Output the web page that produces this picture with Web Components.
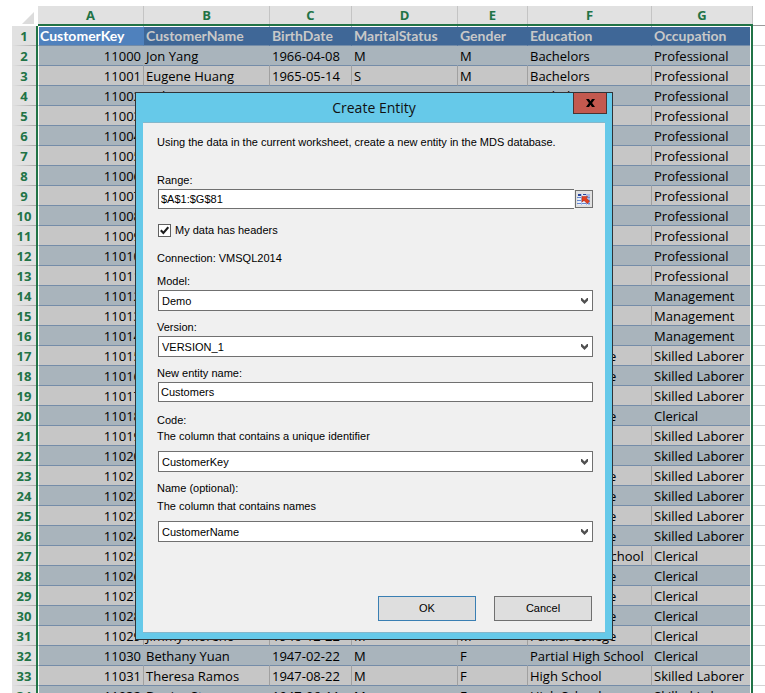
<!DOCTYPE html>
<html lang="en">
<head>
<meta charset="utf-8">
<title>Create Entity</title>
<style>
body { margin: 0; background: #fff; color: #000; }
</style>
</head>
<body>
<desktop-view>
  <work-sheet></work-sheet>
  <dialog-window slot="dialog" heading="Create Entity">
    <entity-form></entity-form>
  </dialog-window>
</desktop-view>

<script>
const attach = (el, html) => { el.attachShadow({ mode: 'open' }).innerHTML = html; return el.shadowRoot; };

class DesktopView extends HTMLElement {
  constructor() {
    super();
    attach(this, `<style>
      :host { display: block; position: relative; height: 100vh; min-height: 640px; overflow: hidden; }
      ::slotted([slot=dialog]) { position: absolute; left: 135px; top: 92px; }
    </style><slot></slot><slot name="dialog"></slot>`);
  }
}

const HEAD = ['CustomerKey', 'CustomerName', 'BirthDate', 'MaritalStatus', 'Gender', 'Education', 'Occupation'];
const P = 'Professional', M = 'Management', S = 'Skilled Laborer', C = 'Clerical', PC = 'Partial College';
const ROWS = [
  ['Jon Yang', '1966-04-08', 'M', 'M', 'Bachelors', P],
  ['Eugene Huang', '1965-05-14', 'S', 'M', 'Bachelors', P],
  ['Ruben Torres', '1965-08-12', 'M', 'M', 'Bachelors', P],
  ...Array.from({ length: 9 }, () => ['', '', '', '', '', P]),
  ...Array.from({ length: 3 }, () => ['', '', '', '', '', M]),
  ['', '', '', '', PC, S],
  ['', '', '', '', PC, S],
  ['', '', '', '', '', S],
  ['', '', '', '', PC, C],
  ['', '', '', '', '', S],
  ['', '', '', '', '', S],
  ['', '', '', '', PC, S],
  ['', '', '', '', PC, S],
  ['', '', '', '', PC, S],
  ['', '', '', '', PC, S],
  ['', '', '', '', 'Partial High School', C],
  ['', '', '', '', PC, C],
  ['', '', '', '', PC, C],
  ['', '', '', '', PC, C],
  ['Jimmy Moreno', '1946-12-22', 'M', 'M', PC, C],
  ['Bethany Yuan', '1947-02-22', 'M', 'F', 'Partial High School', C],
  ['Theresa Ramos', '1947-08-22', 'M', 'F', 'High School', S],
  ['Denise Stone', '1947-06-11', 'M', 'F', 'High School', S]
];

class WorkSheet extends HTMLElement {
  constructor() {
    super();
    const cols = [26, 106, 126, 82, 106, 70, 124, 101].map(w => `<col style="width:${w}px">`).join('');
    const letters = [...'ABCDEFG'].map(l => `<th scope="col">${l}</th>`).join('');
    const head = HEAD.map(t => `<td>${t}</td>`).join('');
    const body = ROWS.map((r, i) => `<tr><th scope="row">${i + 2}</th><td>${11000 + i}</td>${r.map(t => `<td>${t}</td>`).join('')}<td class="rest"></td></tr>`).join('');
    attach(this, `<style>
      :host { display: block; padding: 6px 0 0 12px; font: 13px/18px "Open Sans", "Noto Sans", sans-serif; }
      table { width: 100%; table-layout: fixed; border-collapse: separate; border-spacing: 0; --green: linear-gradient(#217346, #217346); }
      th, td { box-sizing: border-box; height: 20px; padding: 0 0 0 2px; text-align: left; white-space: nowrap; overflow: hidden; border-bottom: 1px solid #748ca8; border-right: 1px solid #a0a0a0; }
      th { padding: 0; text-align: center; color: #217346; font: bold 13px/18px "Open Sans", "Noto Sans", sans-serif; }
      thead th { border: 0; padding: 0 1px 2px 0; background: var(--green) bottom / 100% 2px no-repeat, linear-gradient(#c4c4c4, #c4c4c4) right / 1px 100% no-repeat, #e1e1e1; }
      thead .corner { padding: 0; border: 0; background: #fff; }
      .corner svg { display: block; margin: 4px 0 0 10px; }
      tbody th { border: 0; padding: 0 2px 1px 0; background: var(--green) right / 2px 100% no-repeat, linear-gradient(90deg, #e1e1e1, #a6a6a6) bottom / 100% 1px no-repeat, #e1e1e1; }
      td { --fill: #c6c6c6; --rule: #a0a0a0; background: var(--fill); border-right-color: var(--rule); }
      tr:nth-child(even) td { --fill: #a9b4bc; --rule: #a9b4bc; }
      tr.head td { --fill: #3f6797; --rule: #3f6797; --top: #fff; color: #c8c8c8; font: bold 14px/18px Lato, sans-serif; border-top: 1px solid #fff; vertical-align: top; }
      tr td:nth-child(2) { text-align: right; padding: 0 2px 0 0; border-left: 1px solid #fff; }
      tr.head td:nth-child(2) { --fill: #4f81bd; --rule: #4f81bd; text-align: left; color: #fff; padding-left: 1px; }
      tbody tr td:nth-child(8) { border-right: 0; border-bottom: 0; padding-bottom: 1px; background: var(--green) right / 2px 100% no-repeat, linear-gradient(#fff, #fff) right 2px top / 1px 100% no-repeat, linear-gradient(var(--top, transparent), var(--top, transparent)) top / 100% 1px no-repeat, linear-gradient(#748ca8, #748ca8) bottom / 100% 1px no-repeat, var(--fill); }
      tbody tr.head td:nth-child(8) { border-top: 0; padding-top: 1px; }
      thead td.rest, tbody tr td.rest, tbody tr.head td.rest { background: #fff; border: 0; border-bottom: 1px solid #d4d4d4; }
      thead td.rest { border-bottom-color: #9b9b9b; }
    </style>
    <table><colgroup>${cols}<col></colgroup>
    <thead><tr><td class="corner"><svg width="12" height="12" aria-hidden="true"><path d="M12 0V12H0Z" fill="#dcdcdc"/></svg></td>${letters}<td class="rest"></td></tr></thead>
    <tbody><tr class="head"><th scope="row">1</th>${head}<td class="rest"></td></tr>${body}</tbody></table>`);
  }
}

class DialogWindow extends HTMLElement {
  constructor() {
    super();
    attach(this, `<style>
      :host { display: block; box-sizing: border-box; width: 478px; max-width: calc(100% - 135px); border: 1px solid #2f3337; background: #66c9e9; padding: 0 7px 6px; }
      header { display: grid; grid-template-columns: 1fr; height: 29px; }
      h1 { grid-area: 1 / 1; margin: 0; text-align: center; font: 14px/29px "Open Sans", "Noto Sans", sans-serif; color: #111; }
      button { grid-area: 1 / 1; justify-self: end; box-sizing: border-box; width: 34px; height: 21px; margin-right: -2px; padding: 0; border: 1px solid #4b3331; border-top: 0; background: #c3594f; display: grid; place-items: center; }
      main { background: #f0f0f0; border-top: 1px solid #85b7cb; border-bottom: 1px solid #85b7cb; }
    </style>
    <header><h1></h1><button aria-label="Close"><svg width="9" height="8" viewBox="0 0 9 8"><path d="M0 0H3L4.5 2.2 6 0H9L6.1 4 9 8H6L4.5 5.8 3 8H0L2.9 4Z" fill="#000"/></svg></button></header>
    <main><slot></slot></main>`).querySelector('h1').textContent = this.getAttribute('heading');
  }
}

const FIELD = `
  :host { display: block; }
  label, p { display: block; margin: 0; line-height: 14px; }
  .box { display: flex; margin: 2px 0 0 1px; }
  input, select { box-sizing: border-box; flex: 1; min-width: 0; margin: 0; border: 1px solid #707070; border-radius: 0; background: #fff; color: #000; font: inherit; appearance: none; outline: 0; }`;

class TextField extends HTMLElement {
  constructor() {
    super();
    const root = attach(this, `<style>${FIELD}
      input { height: 20px; padding: 0 2px; }
      :host([joined]) input { border-right: 0; }
    </style><label for="c"></label><div class="box"><input id="c" type="text"><slot></slot></div>`);
    root.querySelector('label').textContent = this.getAttribute('label');
    root.querySelector('input').value = this.getAttribute('value');
  }
}

class SelectField extends HTMLElement {
  constructor() {
    super();
    const hint = this.getAttribute('hint');
    const root = attach(this, `<style>${FIELD}
      .box { display: grid; align-items: center; }
      .hinted { margin-top: 8px; }
      p { margin-top: var(--hint-gap, 2px); }
      select, svg { grid-area: 1 / 1; }
      select { height: 21px; padding: 0 20px 0 3px; }
      svg { justify-self: end; margin-right: 5px; pointer-events: none; }
    </style><label for="c"></label>${hint ? '<p id="h"></p>' : ''}
    <div class="box ${hint ? 'hinted' : ''}"><select id="c" ${hint ? 'aria-describedby="h"' : ''}><option></option></select>
    <svg width="7" height="6" viewBox="0 0 7 6" aria-hidden="true"><path d="M0 0H1L3.5 2.5 6 0H7V2.5L3.5 6 0 2.5Z" fill="#505050"/></svg></div>`);
    root.querySelector('label').textContent = this.getAttribute('label');
    root.querySelector('option').textContent = this.getAttribute('value');
    if (hint) root.querySelector('p').textContent = hint;
  }
}

class CheckField extends HTMLElement {
  constructor() {
    super();
    attach(this, `<style>
      :host { display: block; }
      label { display: flex; align-items: center; gap: 4px; line-height: 14px; padding-left: 1px; }
      span { display: grid; place-items: center; }
      input, svg { grid-area: 1 / 1; }
      input { appearance: none; box-sizing: border-box; width: 13px; height: 13px; margin: 0; border: 1px solid #606060; background: #fff; }
      svg { pointer-events: none; visibility: hidden; }
      input:checked + svg { visibility: visible; }
    </style><label><span><input type="checkbox" checked><svg width="9" height="9" viewBox="0 0 9 9"><path d="M.8 4.2 3.4 7 8.3 1.2" fill="none" stroke="#1c1c1c" stroke-width="2.1"/></svg></span><slot></slot></label>`);
  }
}

class RangePicker extends HTMLElement {
  constructor() {
    super();
    attach(this, `<style>
      :host { display: block; padding: 1px 0 0 1px; }
      button { box-sizing: border-box; width: 18px; height: 18px; padding: 0; border: 1px solid #707070; background: #e1e1e1; display: grid; place-items: center; }
    </style><button aria-label="Select range"><svg width="14" height="13" viewBox="0 0 14 13">
      <path d="M1 1H13V12H1Z" fill="#e8effc"/><path d="M1 1H5V3H1ZM6 1H9V2H6Z" fill="#27459e"/>
      <path d="M0 4.5H13M0 7.5H13M0 10.5H13" stroke="#6687ce"/><path d="M4.5 1V12M9.5 1V12" stroke="#a8bde9"/><path d="M10 1H13V12H11Z" fill="#7391d7" opacity=".55"/>
      <path d="M5 3.4 10.6 3.4 9.4 5 12.4 8.4 10.2 10.6 7 7.4 5 9Z" fill="#e3401f" stroke="#b32c18" stroke-width=".6"/></svg></button>`);
  }
}

class PushButton extends HTMLElement {
  constructor() {
    super();
    attach(this, `<style>
      :host { display: block; }
      button { box-sizing: border-box; width: 98px; height: 25px; padding: 0 0 2px; border: 1px solid #707070; background: #dedede; color: #000; font: inherit; }
      :host([primary]) button { border-color: #3a7fb3; }
    </style><button><slot></slot></button>`);
  }
}

class EntityForm extends HTMLElement {
  constructor() {
    super();
    attach(this, `<style>
      :host { display: flex; flex-direction: column; gap: 9px; padding: 12px 12px 11px 14px; font: 11px/14px "Liberation Sans", Arial, sans-serif; }
      p { margin: 0; }
      .intro { margin-bottom: 15px; }
      check-field { margin: 5px 0; }
      .code { margin-top: 2px; }
      .name { --hint-gap: 4px; }
      footer { display: flex; justify-content: flex-end; gap: 18px; margin-top: 45px; padding-right: 1px; }
    </style>
    <p class="intro">Using the data in the current worksheet, create a new entity in the MDS database.</p>
    <text-field joined label="Range:" value="$A$1:$G$81"><range-picker></range-picker></text-field>
    <check-field>My data has headers</check-field>
    <p>Connection: VMSQL2014</p>
    <select-field label="Model:" value="Demo"></select-field>
    <select-field label="Version:" value="VERSION_1"></select-field>
    <text-field label="New entity name:" value="Customers"></text-field>
    <select-field class="code" label="Code:" hint="The column that contains a unique identifier" value="CustomerKey"></select-field>
    <select-field class="name" label="Name (optional):" hint="The column that contains names" value="CustomerName"></select-field>
    <footer><push-button primary>OK</push-button><push-button>Cancel</push-button></footer>`);
  }
}

customElements.define('desktop-view', DesktopView);
customElements.define('work-sheet', WorkSheet);
customElements.define('dialog-window', DialogWindow);
customElements.define('text-field', TextField);
customElements.define('select-field', SelectField);
customElements.define('check-field', CheckField);
customElements.define('range-picker', RangePicker);
customElements.define('push-button', PushButton);
customElements.define('entity-form', EntityForm);
</script>
</body>
</html>
